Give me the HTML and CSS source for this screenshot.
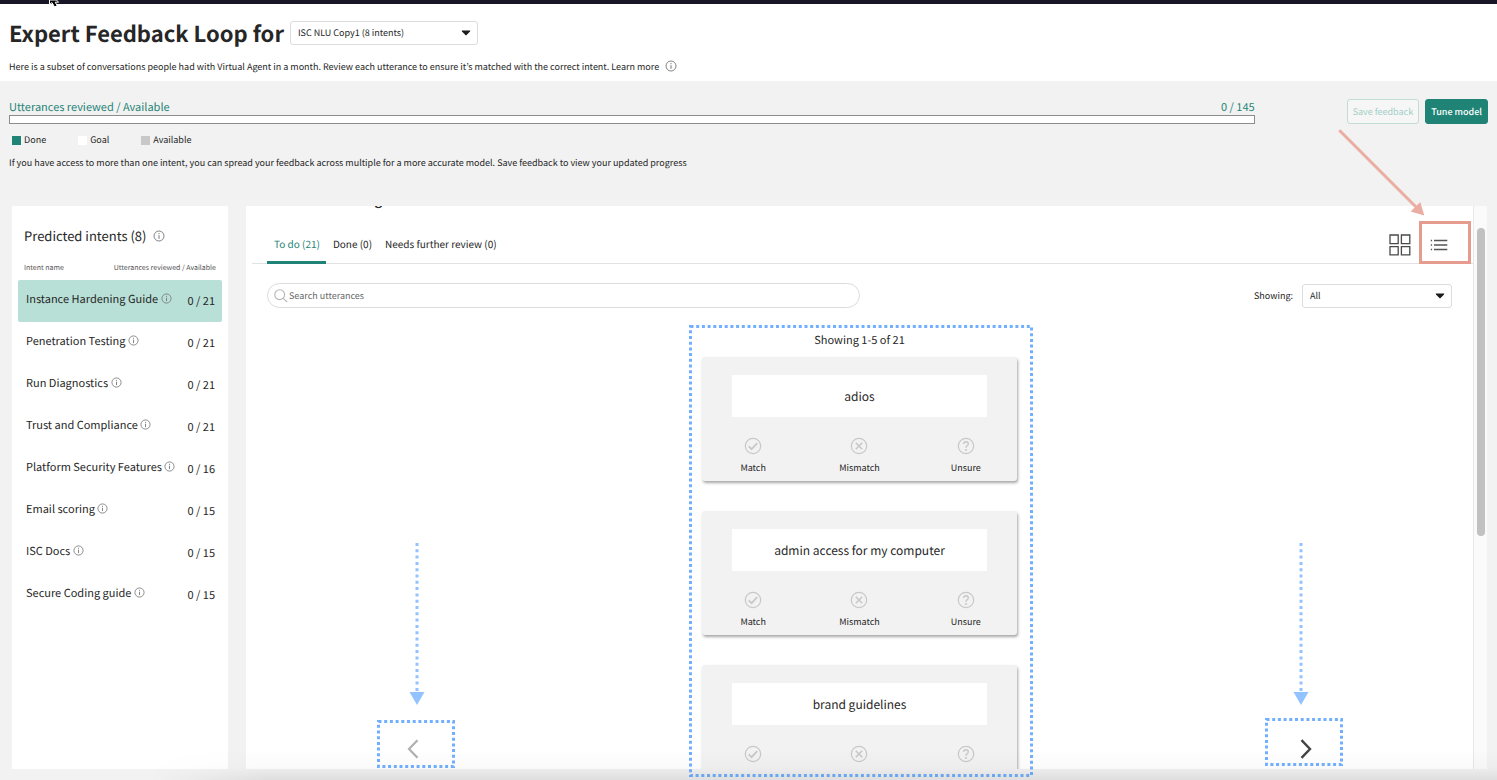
FILE: index.html
```html
<!DOCTYPE html>
<html lang="en">
<head>
  <meta charset="UTF-8">
  <meta name="viewport" content="width=device-width, initial-scale=1.0">
  <title>Expert Feedback Loop</title>
  <link rel="stylesheet" href="styles.css">
</head>
<body>
<!-- shared icons -->
<svg class="sprite" width="0" height="0" aria-hidden="true">
  <symbol id="info" viewBox="0 0 12 12">
    <circle cx="6" cy="6" r="5" fill="none" stroke="currentColor" stroke-width="0.9"/>
    <path d="M6 5.2V8.8M6 3.1V4.2" stroke="currentColor" stroke-width="1"/>
  </symbol>
  <symbol id="caret" viewBox="0 0 10 6">
    <path d="M1 .5H9Q9.6 .7 9 1.4L5.6 5Q5 5.6 4.4 5L1 1.4Q.4 .7 1 .5Z" fill="currentColor"/>
  </symbol>
  <symbol id="match" viewBox="0 0 18 18">
    <circle cx="9" cy="9" r="7.7" fill="none" stroke="currentColor" stroke-width="1.2"/>
    <path d="M4.7 9.4L7.6 12.2L13.2 6.2" fill="none" stroke="currentColor" stroke-width="1.8"/>
  </symbol>
  <symbol id="mismatch" viewBox="0 0 18 18">
    <circle cx="9" cy="9" r="7.7" fill="none" stroke="currentColor" stroke-width="1.2"/>
    <path d="M5.8 5.8L12.2 12.2M12.2 5.8L5.8 12.2" fill="none" stroke="currentColor" stroke-width="1.6"/>
  </symbol>
  <symbol id="unsure" viewBox="0 0 18 18">
    <circle cx="9" cy="9" r="7.7" fill="none" stroke="currentColor" stroke-width="1.2"/>
    <path d="M6.6 7Q6.7 4.8 9 4.8Q11.4 4.9 11.3 7Q11.2 8.1 10 8.8Q9 9.4 9 10.8" fill="none" stroke="currentColor" stroke-width="1.5"/>
    <circle cx="9" cy="13" r="1.1" fill="currentColor"/>
  </symbol>
</svg>

<div class="topbar">
  <svg class="cursor" width="12" height="8" viewBox="0 0 12 8">
    <path d="M1.5 0V4.4L4 2.6L6.6 7L9.2 5.6L7.2 2.2H10.5L8.4 0Z" fill="#000" stroke="#fff" stroke-width="1"/>
  </svg>
</div>

<header class="header">
  <div class="titleRow">
    <h1><label for="model">Expert Feedback Loop for</label></h1>
    <div class="selectBox modelSelect">
      <select id="model"><option>ISC NLU Copy1 (8 intents)</option></select>
      <svg class="caret"><use href="#caret"/></svg>
    </div>
  </div>
  <p class="intro">Here is a subset of conversations people had with Virtual Agent in a month. Review each utterance to ensure it’s matched with the correct intent. Learn more <svg class="info"><use href="#info"/></svg></p>
</header>

<section class="summary">
  <div class="progressBlock">
    <div class="progressLabels">
      <label for="reviewed">Utterances reviewed / Available</label>
      <span>0 / 145</span>
    </div>
    <progress id="reviewed" value="0" max="145"></progress>
    <ul class="legend">
      <li class="done">Done</li>
      <li class="goal">Goal</li>
      <li class="available">Available</li>
    </ul>
    <p class="note">If you have access to more than one intent, you can spread your feedback across multiple for a more accurate model. Save feedback to view your updated progress</p>
  </div>
  <div class="actions">
    <button class="button" disabled>Save feedback</button>
    <button class="button primary">Tune model</button>
  </div>
</section>

<main class="columns">
  <aside class="intents">
    <h2>Predicted intents (8) <svg class="info"><use href="#info"/></svg></h2>
    <table>
      <thead>
        <tr><th>Intent name</th><th><div class="wideHead">Utterances reviewed / Available</div></th></tr>
      </thead>
      <tbody>
        <tr class="selected"><td>Instance Hardening Guide <svg class="info"><use href="#info"/></svg></td><td>0 / 21</td></tr>
        <tr><td>Penetration Testing <svg class="info"><use href="#info"/></svg></td><td>0 / 21</td></tr>
        <tr><td>Run Diagnostics <svg class="info"><use href="#info"/></svg></td><td>0 / 21</td></tr>
        <tr><td>Trust and Compliance <svg class="info"><use href="#info"/></svg></td><td>0 / 21</td></tr>
        <tr><td>Platform Security Features <svg class="info"><use href="#info"/></svg></td><td>0 / 16</td></tr>
        <tr><td>Email scoring <svg class="info"><use href="#info"/></svg></td><td>0 / 15</td></tr>
        <tr><td>ISC Docs <svg class="info"><use href="#info"/></svg></td><td>0 / 15</td></tr>
        <tr><td>Secure Coding guide <svg class="info"><use href="#info"/></svg></td><td>0 / 15</td></tr>
      </tbody>
    </table>
  </aside>

  <div class="workspace">
    <div class="panel">
      <div class="content">
        <h2 class="intentTitle">Instance Hardening Guide</h2>
        <div class="tabRow">
          <nav class="tabs">
            <button class="tab active">To do (21)</button>
            <button class="tab">Done (0)</button>
            <button class="tab">Needs further review (0)</button>
          </nav>
          <div class="views">
            <button class="icon" aria-label="Card view">
              <svg width="22" height="22" viewBox="0 0 22 22" fill="none" stroke="#4a4a4a" stroke-width="1.3">
                <path d="M1 1H9.2V9.6H1ZM12.4 1H20.8V9.6H12.4ZM1 12.6H9.2V20.8H1ZM12.4 12.6H20.8V20.8H12.4Z"/>
              </svg>
            </button>
            <button class="icon" aria-label="List view">
              <svg width="18" height="12" viewBox="0 0 18 12" stroke="#555" stroke-width="1.3">
                <path d="M4 1.5H17.3M4 6H17.3M4 10.5H17.3M.8 1.5H2.1M.8 6H2.1M.8 10.5H2.1"/>
              </svg>
            </button>
          </div>
        </div>

        <div class="filters">
          <div class="search">
            <svg width="14" height="14" viewBox="0 0 14 14" fill="none" stroke="#b5b5b5" stroke-width="1.1">
              <circle cx="5.7" cy="5.7" r="4.9"/><path d="M9.3 9.3L13.2 13.2"/>
            </svg>
            <input type="text" placeholder="Search utterances" aria-label="Search utterances">
          </div>
          <div class="showing">
            <label for="filter">Showing:</label>
            <div class="selectBox filterSelect">
              <select id="filter"><option>All</option></select>
              <svg class="caret"><use href="#caret"/></svg>
            </div>
          </div>
        </div>

        <div class="deck">
          <button class="icon pager" aria-label="Previous" disabled>
            <svg width="14" height="20" viewBox="0 0 14 20" fill="none" stroke="#b0b0b0" stroke-width="2.2"><path d="M11.5 1.2L3 10L11.5 18.8"/></svg>
          </button>
          <div class="cards">
            <p class="count">Showing 1-5 of 21</p>
            <article class="card">
              <p class="utterance">adios</p>
              <div class="votes">
                <button class="vote"><svg><use href="#match"/></svg>Match</button>
                <button class="vote"><svg><use href="#mismatch"/></svg>Mismatch</button>
                <button class="vote"><svg><use href="#unsure"/></svg>Unsure</button>
              </div>
            </article>
            <article class="card">
              <p class="utterance">admin access for my computer</p>
              <div class="votes">
                <button class="vote"><svg><use href="#match"/></svg>Match</button>
                <button class="vote"><svg><use href="#mismatch"/></svg>Mismatch</button>
                <button class="vote"><svg><use href="#unsure"/></svg>Unsure</button>
              </div>
            </article>
            <article class="card">
              <p class="utterance">brand guidelines</p>
              <div class="votes">
                <button class="vote" aria-label="Match"><svg><use href="#match"/></svg></button>
                <button class="vote" aria-label="Mismatch"><svg><use href="#mismatch"/></svg></button>
                <button class="vote" aria-label="Unsure"><svg><use href="#unsure"/></svg></button>
              </div>
            </article>
          </div>
          <button class="icon pager" aria-label="Next">
            <svg width="14" height="20" viewBox="0 0 14 20" fill="none" stroke="#444" stroke-width="2.4"><path d="M2.5 1.2L11 10L2.5 18.8"/></svg>
          </button>
        </div>
      </div>
      <div class="scrollbar"><div class="thumb"></div></div>
    </div>

    <!-- callouts drawn over the panel -->
    <svg class="callout frameCards"><rect class="dots" x="1.5" y="1.5" width="341" height="449"/></svg>
    <svg class="callout framePrev"><rect class="dots" x="1.5" y="1.5" width="75" height="45"/></svg>
    <svg class="callout frameNext"><rect class="dots" x="1.5" y="1.5" width="75" height="45"/></svg>
    <svg class="callout arrowPrev"><path class="shaft" d="M8 0V150"/><path class="head" d="M.5 149H15.5L8 162Z"/></svg>
    <svg class="callout arrowNext"><path class="shaft" d="M8 0V150"/><path class="head" d="M.5 149H15.5L8 162Z"/></svg>
    <div class="callout frameList"></div>
    <svg class="callout arrowList"><path d="M3.3 2.3L80 79" stroke="#ebaca2" stroke-width="3"/><path d="M88.3 87.5L84.3 74L74.6 83.5Z" fill="#ebaca2"/></svg>
  </div>
</main>
<div class="shade"></div>
</body>
</html>
```
FILE: styles.css
```css
* {
  box-sizing: border-box;
}

body {
  margin: 0;
  height: 100vh;
  display: flex;
  flex-direction: column;
  position: relative;
  overflow: hidden;
  background: #f2f2f2;
  color: #262626;
  font-family: "Noto Sans CJK KR", "Noto Sans", sans-serif;
  font-size: 9px;
  line-height: 14px;
  text-rendering: geometricPrecision;
}

h1, h2, p, ul {
  margin: 0;
  padding: 0;
}

button, input, select {
  font: inherit;
  color: inherit;
  text-rendering: inherit;
}

.sprite {
  position: absolute;
}

.topbar {
  height: 4px;
  flex: none;
  background: #181526;
  position: relative;
}

.cursor {
  position: absolute;
  left: 48px;
  top: 0;
}

/* Header */
.header {
  flex: none;
  height: 77px;
  padding: 12px 9px 0;
  background: #fff;
}

.titleRow {
  display: flex;
  align-items: center;
  gap: 6px;
  height: 34px;
}

h1 {
  font-size: 22px;
  line-height: 32px;
  font-weight: bold;
}

.intro {
  margin-top: 10px;
}

.info {
  width: 12px;
  height: 12px;
  color: #777;
  vertical-align: middle;
}

.intro .info {
  margin: -3px 0 0 4px;
}

.selectBox {
  display: grid;
  align-items: center;
  height: 24px;
}

.selectBox > * {
  grid-area: 1 / 1;
}

.selectBox select {
  appearance: none;
  width: 100%;
  height: 100%;
  padding: 0 7px;
  background: #fff;
  border: 1px solid #dcdcdc;
  border-radius: 3px;
}

.caret {
  width: 10px;
  height: 6px;
  margin-right: 7px;
  justify-self: end;
  color: #1c1c1c;
  pointer-events: none;
}

.modelSelect {
  width: 188px;
}

/* Progress */
.summary {
  flex: none;
  display: flex;
  align-items: flex-start;
  height: 125px;
  padding: 18px 9px 0;
}

.progressBlock {
  flex: 1;
  margin-right: 92px;
}

.progressLabels {
  display: flex;
  justify-content: space-between;
  color: #1f8476;
  font-size: 11px;
  line-height: 16px;
}

progress {
  appearance: none;
  display: block;
  width: 100%;
  height: 9px;
  background: #fff;
  border: 1px solid #8c8c8c;
}

progress::-webkit-progress-bar {
  background: #fff;
}

progress::-webkit-progress-value {
  background: #1f8476;
}

.legend {
  display: flex;
  list-style: none;
  margin: 9px 0 0 3px;
}

.legend li {
  display: flex;
  align-items: center;
  gap: 3px;
  margin-right: 32px;
}

.legend li::before {
  content: "";
  width: 9px;
  height: 9px;
  background: #1f8476;
}

.legend .goal::before {
  background: #fff;
}

.legend .available::before {
  background: #c8c8c8;
}

.note {
  margin-top: 9px;
}

.actions {
  display: flex;
  gap: 6px;
}

.button {
  height: 25px;
  padding: 0 5px;
  background: #f6f6f6;
  border: 1px solid #c2ddd6;
  border-radius: 3px;
  color: #a4cfc5;
  white-space: nowrap;
}

.primary {
  background: #1f8476;
  border-color: #1f8476;
  color: #fff;
  font-weight: 500;
}

/* Columns */
.columns {
  flex: 1;
  min-height: 0;
  display: flex;
  gap: 18px;
  padding: 0 10px 11px 12px;
}

.intents {
  flex: none;
  width: 216px;
  padding: 20px 6px 0;
  background: #fff;
}

.intents h2 {
  padding-left: 6px;
  font-size: 13px;
  line-height: 20px;
  font-weight: normal;
}

.intents h2 .info {
  margin: -3px 0 0 4px;
}

.intents table {
  width: 100%;
  margin-top: 10px;
  table-layout: fixed;
  border-collapse: collapse;
  white-space: nowrap;
}

.intents th {
  height: 24px;
  padding: 0 6px;
  color: #555;
  font-size: 7px;
  font-weight: normal;
  text-align: left;
}

.intents th:last-child {
  width: 44px;
}

.wideHead {
  display: flex;
  justify-content: flex-end;
}

.intents td {
  height: 42px;
  padding: 0 0 4px 8px;
  font-size: 11px;
}

.intents td:last-child {
  padding: 0 7px 0 0;
  text-align: right;
}

.intents td .info {
  width: 11px;
  height: 11px;
  margin-top: -3px;
}

.selected td {
  background: #b8e0d6;
}

.selected td:first-child {
  border-radius: 2px 0 0 2px;
}

.selected td:last-child {
  border-radius: 0 2px 2px 0;
}

.workspace {
  flex: 1;
  min-width: 0;
  position: relative;
  display: flex;
}

.panel {
  flex: 1;
  display: flex;
  overflow: hidden;
  background: #fff;
}

.content {
  flex: 1;
  min-width: 0;
  display: flex;
  flex-direction: column;
}

.scrollbar {
  width: 14px;
  padding: 22px 2px 0 3px;
  background: #fafafa;
  border-left: 1px solid #e8e8e8;
}

.thumb {
  height: 308px;
  border-radius: 4px;
  background: #c1c1c1;
}

/* Scrolled almost out of view */
.intentTitle {
  flex: none;
  margin-top: -16px;
  padding-left: 12px;
  font-size: 13px;
  line-height: 20px;
  font-weight: bold;
}

.tabRow {
  flex: none;
  display: flex;
  justify-content: space-between;
  height: 54px;
  margin-left: 6px;
  padding: 0 25px 0 15px;
  border-bottom: 1px solid #e2e2e2;
}

.tabs {
  display: flex;
}

.tab {
  height: 54px;
  padding: 16px 6px 0 7px;
  background: none;
  border: 0;
  border-bottom: 3px solid transparent;
  font-size: 10px;
}

.tab.active {
  color: #1f8476;
  border-color: #1f8476;
}

.icon {
  display: flex;
  padding: 0;
  background: none;
  border: 0;
}

.views {
  display: flex;
  align-items: center;
  gap: 19px;
  padding-top: 16px;
}

.filters {
  flex: none;
  display: flex;
  justify-content: space-between;
  margin: 19px 21px 0;
}

.search {
  display: flex;
  align-items: center;
  gap: 1px;
  width: 50%;
  height: 25px;
  padding: 0 6px;
  border: 1px solid #dcdcdc;
  border-radius: 13px;
}

.search input {
  flex: 1;
  padding: 0;
  border: 0;
  outline: none;
}

.search input::placeholder {
  color: #6a6a6a;
}

.showing {
  display: flex;
  align-items: center;
  gap: 9px;
}

.filterSelect {
  width: 150px;
}

/* Cards */
.deck {
  flex: 1;
  min-height: 0;
  display: flex;
  justify-content: space-between;
  align-items: flex-end;
  padding: 0 160px;
}

.pager {
  padding-bottom: 10px;
}

.cards {
  align-self: flex-start;
  width: 315px;
  height: 100%;
  padding-top: 25px;
}

.count {
  height: 24px;
  font-size: 11px;
  text-align: center;
}

.card {
  height: 124px;
  margin-bottom: 30px;
  padding-top: 18px;
  background: #f2f2f2;
  border-radius: 3px;
  box-shadow: 1px 2px 3px rgba(0, 0, 0, .35);
}

.utterance {
  height: 42px;
  margin: 0 30px;
  background: #fff;
  font-size: 12px;
  line-height: 44px;
  text-align: center;
}

.votes {
  display: grid;
  grid-template-columns: repeat(3, 1fr);
  gap: 24px;
  padding: 20px 10px 0;
}

.vote {
  display: flex;
  flex-direction: column;
  align-items: center;
  gap: 6px;
  padding: 0;
  background: none;
  border: 0;
}

.vote svg {
  width: 18px;
  height: 18px;
  color: #c8c8c8;
}

/* Callouts */
.callout {
  position: absolute;
  pointer-events: none;
}

.dots {
  fill: none;
  stroke: #72b0ff;
  stroke-width: 3;
  stroke-dasharray: 3 2.7;
}

.shaft {
  stroke: #93c3ff;
  stroke-width: 3;
  stroke-dasharray: 3 3.3;
}

.head {
  fill: #93c3ff;
}

.frameCards {
  left: calc(50% - 178px);
  top: 119px;
  width: 344px;
  height: 452px;
}

.framePrev, .frameNext {
  width: 78px;
  height: 48px;
}

.framePrev {
  left: 131px;
  bottom: 1px;
}

.frameNext {
  right: 144px;
  bottom: 3px;
}

.arrowPrev, .arrowNext {
  bottom: 64px;
  width: 16px;
  height: 162px;
}

.arrowPrev {
  left: 163px;
}

.arrowNext {
  right: 178px;
}

.frameList {
  right: 16px;
  top: 15px;
  width: 52px;
  height: 43px;
  border: 3px solid #e69b8f;
}

.arrowList {
  right: 61px;
  top: -78px;
  width: 90px;
  height: 90px;
}

/* Soft shadow along the bottom edge of the window */
.shade {
  position: absolute;
  left: 150px;
  right: 0;
  bottom: 0;
  height: 30px;
  background: linear-gradient(to bottom, rgba(0, 0, 0, 0), rgba(0, 0, 0, .02) 60%, rgba(0, 0, 0, .08));
  mask-image: linear-gradient(to right, transparent, #000 120px);
  pointer-events: none;
}
```
